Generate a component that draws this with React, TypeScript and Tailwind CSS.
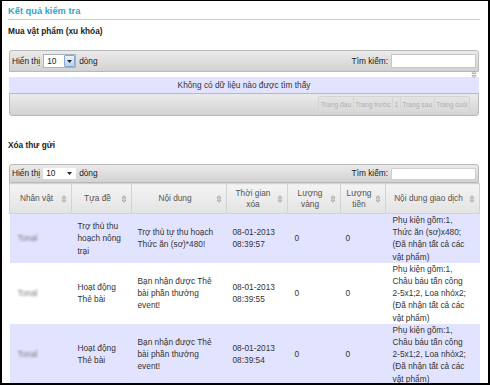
import React from "react";

type Row = {
  name: string;
  title: string[];
  content: string[];
  time: string[];
  gold: string;
  money: string;
  detail: string[];
};

const rows: Row[] = [
  {
    name: "Tonal",
    title: ["Trợ thủ thu", "hoạch nông", "trại"],
    content: ["Trợ thủ tự thu hoạch", "Thức ăn (sơ)*480!"],
    time: ["08-01-2013", "08:39:57"],
    gold: "0",
    money: "0",
    detail: ["Phụ kiện gồm:1,", "Thức ăn (sơ)x480;", "(Đã nhận tất cả các", "vật phẩm)"],
  },
  {
    name: "Tonal",
    title: ["Hoạt động", "Thẻ bài"],
    content: ["Bạn nhận được Thẻ", "bài phần thưởng", "event!"],
    time: ["08-01-2013", "08:39:55"],
    gold: "0",
    money: "0",
    detail: [
      "Phụ kiện gồm:1,",
      "Châu báu tấn công",
      "2-5x1;2, Loa nhỏx2;",
      "(Đã nhận tất cả các",
      "vật phẩm)",
    ],
  },
  {
    name: "Tonal",
    title: ["Hoạt động", "Thẻ bài"],
    content: ["Bạn nhận được Thẻ", "bài phần thưởng", "event!"],
    time: ["08-01-2013", "08:39:54"],
    gold: "0",
    money: "0",
    detail: [
      "Phụ kiện gồm:1,",
      "Châu báu tấn công",
      "2-5x1;2, Loa nhỏx2;",
      "(Đã nhận tất cả các",
      "vật phẩm)",
    ],
  },
];

const columns = [
  { label: ["Nhân vật"], width: 62 },
  { label: ["Tựa đề"], width: 60 },
  { label: ["Nội dung"], width: 95 },
  { label: ["Thời gian", "xóa"], width: 61 },
  { label: ["Lượng", "vàng"], width: 53 },
  { label: ["Lượng", "tiền"], width: 45 },
  { label: ["Nội dung giao dịch"], width: 94 },
];

function SortIcon() {
  return (
    <svg width="6" height="9" viewBox="0 0 6 9" className="block">
      <path d="M1 3.5 L3 1.2 L5 3.5 Z" fill="none" stroke="#999" strokeWidth="0.8" />
      <path d="M1 5.5 L3 7.8 L5 5.5 Z" fill="none" stroke="#999" strokeWidth="0.8" />
    </svg>
  );
}

function Lines({ lines }: { lines: string[] }) {
  return (
    <>
      {lines.map((l, i) => (
        <span key={i} className="block whitespace-nowrap">
          {l}
        </span>
      ))}
    </>
  );
}

function Toolbar({ fancySelect, height }: { fancySelect: boolean; height: string }) {
  return (
    <div
      className={`flex ${height} items-center justify-between rounded-t-[3px] border border-[#b9b9b9] bg-linear-to-b from-[#ebebeb] to-[#d2d2d2] pl-[2px] pr-[2px] text-[#222]`}
    >
      <div className="flex items-center">
        <span>Hiển thị</span>
        {fancySelect ? (
          <div className="relative ml-[3px] mr-[3px] flex h-[14px] w-[33px] items-center border border-[#a9b2bd] bg-white">
            <span className="pl-[3px]">10</span>
            <span className="absolute bottom-0 right-0 top-0 flex w-[11px] items-center justify-center rounded-[1px] border border-[#87a6cf] bg-linear-to-b from-[#eef4fc] to-[#bcd1ec]">
              <svg width="5" height="3" viewBox="0 0 5 3">
                <path d="M0 0 H5 L2.5 3 Z" fill="#1f2a3a" />
              </svg>
            </span>
          </div>
        ) : (
          <div className="relative ml-[3px] mr-[3px] flex h-[11px] w-[33px] items-center bg-white">
            <span className="pl-[3px]">10</span>
            <span className="absolute right-[4px] top-[4px]">
              <svg width="5" height="3" viewBox="0 0 5 3" className="block">
                <path d="M0 0 H5 L2.5 3 Z" fill="#1f1f1f" />
              </svg>
            </span>
          </div>
        )}
        <span>dòng</span>
      </div>
      <div className="flex items-center">
        <span>Tìm kiếm:</span>
        <div
          className={`ml-[3px] w-[85px] bg-white ${
            fancySelect ? "h-[14px] border border-[#c6c6c6]" : "h-[12px] border border-[#d0d0d0]"
          }`}
        />
      </div>
    </div>
  );
}

export default function App() {
  return (
    <div className="h-[385px] w-[490px] overflow-hidden border-b-2 border-l-2 border-r-2 border-t border-black bg-white font-['Liberation_Sans',Arial,sans-serif] text-[8.3px] text-[#333]">
      <div className="pl-[6px] pr-[8px] pt-[4px]">
        <h1 className="border-b border-[#a9dce9] pb-[1px] text-[9.3px] font-bold leading-[13px] text-[#38a2c8]">
          Kết quả kiểm tra
        </h1>

        <h2 className="mt-[5px] font-bold leading-[12px] text-[#222]">Mua vật phẩm (xu khóa)</h2>

        <div className="mx-px mt-[13px]">
          <Toolbar fancySelect height="h-[22px]" />
          <div className="relative h-[5px] bg-white">
            <span className="absolute right-[2px] top-[-2px]">
              <SortIcon />
            </span>
          </div>
          <div className="h-[16px] bg-[#e2e4ff] text-center leading-[16px] text-[#333]">
            Không có dữ liệu nào được tìm thấy
          </div>
          <div className="flex h-[23px] items-center justify-end rounded-b-[3px] border border-[#b9b9b9] bg-linear-to-b from-[#ebebeb] to-[#d2d2d2] pr-[8px]">
            <div className="flex items-center rounded-[2px] border border-[#d4d4d4] text-[6.7px] text-[#b0b0b0]">
              {["Trang đầu", "Trang trước", "1", "Trang sau", "Trang cuối"].map((t) => (
                <span
                  key={t}
                  className="border-l border-[#d6d6d6] bg-[#dfdfdf]/40 px-[1.5px] py-[3px] leading-[9px] first:border-l-0"
                >
                  {t}
                </span>
              ))}
            </div>
          </div>
        </div>

        <h2 className="mt-[23px] font-bold leading-[12px] text-[#222]">Xóa thư gửi</h2>

        <div className="mx-px mt-[13px]">
          <Toolbar fancySelect={false} height="h-[19px]" />
          <table className="w-full table-fixed border-collapse">
            <colgroup>
              {columns.map((c, i) => (
                <col key={i} style={{ width: c.width }} />
              ))}
            </colgroup>
            <thead>
              <tr className="h-[30px]">
                {columns.map((c, i) => (
                  <th
                    key={i}
                    className="relative border border-[#d3d3d3] bg-linear-to-b from-[#f4f4f4] to-[#e3e3e3] pl-[4px] pr-[12px] text-center align-middle font-normal leading-[10.5px] text-[#555]"
                  >
                    <Lines lines={c.label} />
                    <span className="absolute right-[4px] top-1/2 -translate-y-1/2">
                      <SortIcon />
                    </span>
                  </th>
                ))}
              </tr>
            </thead>
            <tbody className="leading-[12.2px] text-[#333]">
              {rows.map((r, i) => (
                <tr key={i} className={i % 2 === 0 ? "bg-[#e2e4ff]" : "bg-white"}>
                  <td className="pl-[8px] align-middle">
                    <span className="text-[#7a7a7a] blur-[1px]">{r.name}</span>
                  </td>
                  <td className="pl-[6px] align-middle">
                    <Lines lines={r.title} />
                  </td>
                  <td className="pl-[6px] align-middle">
                    <Lines lines={r.content} />
                  </td>
                  <td className="pl-[6px] align-middle">
                    <Lines lines={r.time} />
                  </td>
                  <td className="pl-[7px] align-middle">{r.gold}</td>
                  <td className="pl-[5px] align-middle">{r.money}</td>
                  <td className="pl-[7px] align-middle">
                    <Lines lines={r.detail} />
                  </td>
                </tr>
              ))}
            </tbody>
          </table>
        </div>
      </div>
    </div>
  );
}
